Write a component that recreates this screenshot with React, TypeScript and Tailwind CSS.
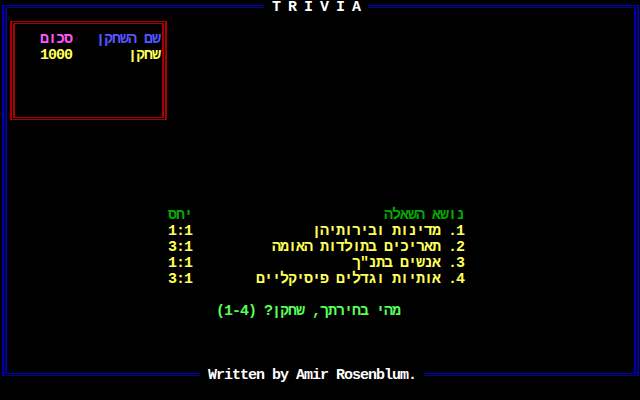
// Trivia game start screen — DOS text-mode look
const font = "font-['Liberation_Mono','DejaVu_Sans_Mono',monospace] text-[15px] tracking-[-1px] font-bold leading-[16px]"

const topics = [
  { text: '1. מדינות ובירותיהן', odds: '1:1' },
  { text: '2. תאריכים בתולדות האומה', odds: '3:1' },
  { text: '3. אנשים בתנ"ך', odds: '1:1' },
  { text: '4. אותיות וגדלים פיסיקליים', odds: '3:1' },
]

export default function App() {
  return (
    <div className={`relative w-[640px] h-[400px] bg-black overflow-hidden ${font}`}>
      {/* Blue double frame */}
      <div className="ml-[2px] mt-[5px] w-[637px] h-[371px] border-x-2 border-y border-[#0000aa] p-px">
        <div className="h-full border-x-2 border-y border-[#0000aa]">
          {/* Score box */}
          <div className="ml-[3px] mt-[13px] w-[157px] h-[99px] border-x-2 border-y border-[#aa0000] p-px">
            <div className="h-full border-x-2 border-y border-[#aa0000] pt-[8px] pl-[25px] pr-[2px]">
              <div className="flex justify-between h-[16px]">
                <span dir="rtl" className="text-[#ff55ff]">סכום</span>
                <span dir="rtl" className="text-[#5555ff]">שם השחקן</span>
              </div>
              <div className="flex justify-between h-[16px] text-[#ffff55]">
                <span>1000</span>
                <span dir="rtl">שחקן</span>
              </div>
            </div>
          </div>

          {/* Topic list */}
          <div className="ml-[161px] mt-[88px] w-[296px]">
            <div className="flex justify-between h-[16px] text-[#00aa00]">
              <span dir="rtl">יחס</span>
              <span dir="rtl">נושא השאלה</span>
            </div>
            {topics.map((t) => (
              <div key={t.text} className="flex justify-between h-[16px] text-[#ffff55]">
                <span>{t.odds}</span>
                <span dir="rtl">{t.text}</span>
              </div>
            ))}
          </div>

          {/* Prompt */}
          <div dir="rtl" className="ml-[209px] mt-[16px] w-[184px] h-[16px] text-[#55ff55] whitespace-pre">
            מהי בחירתך, שחקן? (1-4)
          </div>
        </div>
      </div>

      {/* Title and credit sit over the frame lines */}
      <div className="absolute left-[264px] top-0 h-[16px] bg-black text-white whitespace-pre">{' T R I V I A '}</div>
      <div className="absolute left-[200px] top-[368px] h-[16px] bg-black text-white whitespace-pre">{' Written by Amir Rosenblum. '}</div>
    </div>
  )
}
